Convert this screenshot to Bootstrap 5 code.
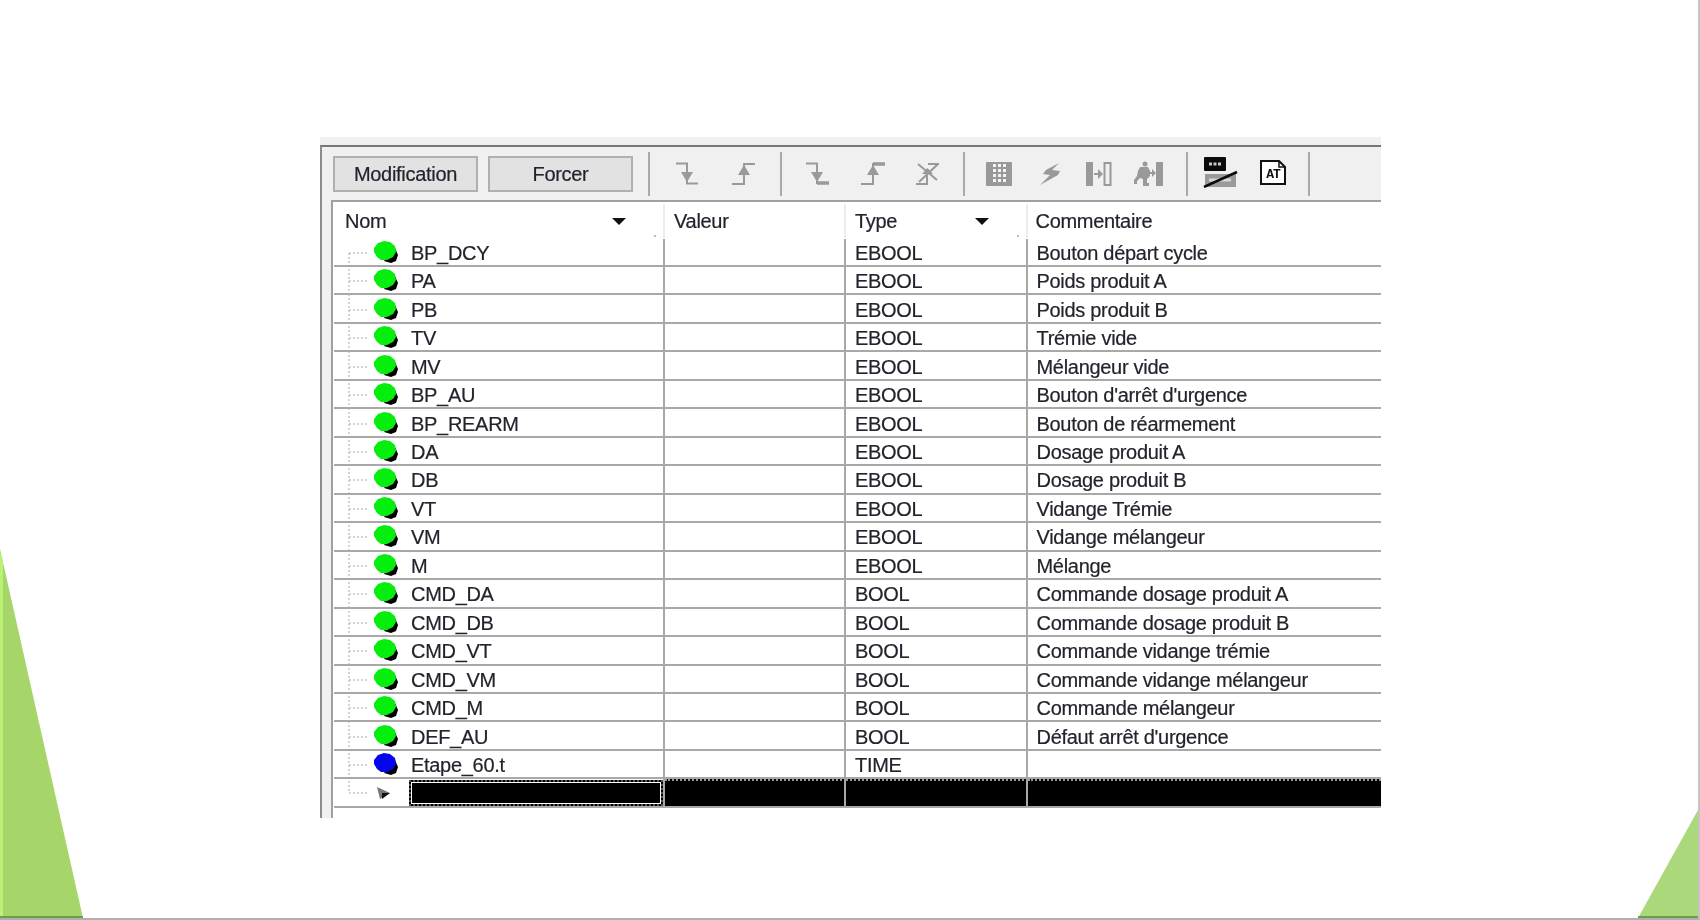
<!DOCTYPE html>
<html lang="fr">
<head>
<meta charset="utf-8">
<title>Table d'animation</title>
<link href="https://cdn.jsdelivr.net/npm/bootstrap@5.3.0/dist/css/bootstrap.min.css" rel="stylesheet">
<style>
body{margin:0;background:#fff;overflow:hidden}
.slide{position:relative;width:1700px;height:920px;overflow:hidden;background:#fff;padding:137px 0 0 320px;border-right:2px solid #c4c4c4;border-bottom:2px solid #b0b0b0}
.deco{position:absolute;left:0;top:0;width:1700px;height:920px;pointer-events:none}
.win{width:1061px;height:681px;font-family:"Liberation Sans",Arial,sans-serif;font-size:20px;letter-spacing:-.3px;color:#23232e;-webkit-text-stroke:.2px #23232e;filter:blur(.45px)}
.band{height:8px;background:#f0f0f0}
.winmain{height:673px;background:#f0f0f0;border-top:2px solid #777;border-left:2px solid #8c8c8c}
.tbar{height:53px;padding-left:11px;background:#f0f0f0}
.tbtn{width:145px;height:36px;margin-top:1px;padding:0;background:#e2e2e2;border:2px solid #b0b0b0;border-radius:0;color:#23232e;font-size:20px;letter-spacing:-.3px;line-height:30px}
.tbtn:hover{background:#e2e2e2;border-color:#b0b0b0;color:#23232e}
.tbtn+.tbtn{margin-left:10px}
.tsep{width:2px;height:44px;margin-top:1px;background:#a9a9a9;flex:none}
.ic{flex:none;color:#999;display:block}
.s1{margin-left:15px}.i1{margin-left:25px}.i2{margin-left:33px}.s2{margin-left:24px}
.i3{margin-left:23px}.i4{margin-left:32px}.i5{margin-left:30px}.s3{margin-left:23px}
.i6{margin-left:21px}.i7{margin-left:26px}.i8{margin-left:24px}.i9{margin-left:21px}.s4{margin-left:23px}
.i10{margin-left:15px;margin-top:-2px}.i11{margin-left:21px;margin-top:-3px}.s5{margin-left:21px}
.garea{margin-left:9px;height:618px;background:#fff;border-left:2px solid #a0a0a0;border-top:2px solid #a0a0a0;overflow:hidden}
.grow-h,.grow-r{display:grid;grid-template-columns:331px 181px 181.500px 1fr;margin-left:1px}
.grow-h{height:36.5px}
.grow-r{height:28.47px;border-bottom:2px solid #a8a8a8}
.hcell{position:relative;display:flex;align-items:center;padding:0 0 1px 9px;border-right:2px solid #ececec;height:34px;margin-top:2px}
.hcell:first-child{padding-left:11px}
.hcell:last-child{border-right:0;padding-left:8px}
.harrow{position:absolute;top:14px;width:0;height:0;border-left:7px solid transparent;border-right:7px solid transparent;border-top:7px solid #111}
.hdot{position:absolute;right:7px;bottom:1px;width:2px;height:2px;background:#bbb}
.hname .harrow,.htype .harrow{right:37px}
.cell{display:flex;align-items:center;border-right:2px solid #a8a8a8;padding:2px 0 0 9px;height:26.47px;white-space:nowrap}
.cell:last-child{border-right:0;padding-left:9px}
.cell.cname{padding-left:6px}
.tree{flex:none;overflow:visible;margin-right:11px}
.cell.cblack{background:#000;border-right:2px solid #a8a8a8;border-top:2px dotted #999;height:27px;padding:0}
.cell.cblack:last-child{border-right:0}
.cname-sel{padding-left:6px;height:26.47px;display:flex;align-items:center;border-right:2px solid #a8a8a8}
.selbox{flex:1;height:26px;margin:1px 0 0 -2px;background:#000;border:2px dotted #555;box-shadow:inset 0 0 0 1px #fff}
.defs{position:absolute;width:0;height:0}
</style>
</head>
<body>
<svg class="defs" aria-hidden="true">
<defs>
<symbol id="g" overflow="visible" viewBox="0 0 60 28"><path d="M44 22L51 24 56 22 58 16 55 9 49 16Z" fill="#000"/><path d="M34 9l4-5 6-2 6 1 5 4 1 6-3 5-6 3-6 0-4-3-3-5z" fill="#06ee0e"/></symbol>
<symbol id="b" overflow="visible" viewBox="0 0 60 28"><path d="M44 22L51 24 56 22 58 16 55 9 49 16Z" fill="#000"/><path d="M34 9l4-5 6-2 6 1 5 4 1 6-3 5-6 3-6 0-4-3-3-5z" fill="#0606ee"/></symbol>
</defs>
</svg>

<div class="slide">
<svg class="deco" viewBox="0 0 1700 920" aria-hidden="true">
<polygon points="0,549 83,918 0,918" fill="#a6d669"/>
<polygon points="0,552 3,562 3,918 0,918" fill="#b9f274"/>
<polygon points="1698,810 1698,918 1638,918" fill="#abd87b"/>
<rect x="0" y="916" width="83" height="2" fill="#6f9a48"/>
<rect x="1638" y="916" width="60" height="2" fill="#6f9a48"/>
</svg>

<div class="win">
<div class="band"></div>
<div class="winmain">
<div class="tbar d-flex align-items-center">
<button type="button" class="btn tbtn">Modification</button>
<button type="button" class="btn tbtn">Forcer</button>
<span class="tsep s1"></span>
<svg class="ic i1" width="24" height="26" viewBox="0 0 24 26"><path d="M1 2.5H12V22.5H23" fill="none" stroke="currentColor" stroke-width="2"/><path d="M6 11H18L12 21Z" fill="currentColor"/></svg>
<svg class="ic i2" width="24" height="26" viewBox="0 0 24 26"><path d="M0 23H12V3H23" fill="none" stroke="currentColor" stroke-width="2"/><path d="M6 14H18L12 4Z" fill="currentColor"/></svg>
<span class="tsep s2"></span>
<svg class="ic i3" width="24" height="26" viewBox="0 0 24 26"><path d="M1 2.5H12V22H23" fill="none" stroke="currentColor" stroke-width="2"/><path d="M12 22H24" stroke="currentColor" stroke-width="3.5"/><path d="M6 11H18L12 21Z" fill="currentColor"/></svg>
<svg class="ic i4" width="24" height="26" viewBox="0 0 24 26"><path d="M0 23H12V3H23" fill="none" stroke="currentColor" stroke-width="2"/><path d="M12 3H24" stroke="currentColor" stroke-width="3.5"/><path d="M6 14H18L12 4Z" fill="currentColor"/></svg>
<svg class="ic i5" width="25" height="26" viewBox="0 0 25 26"><path d="M3 3L22 19M23 3L4 21M12 8V23M1 23H13M13 3H24" fill="none" stroke="currentColor" stroke-width="2"/><path d="M7 13H18L12.500 7Z" fill="currentColor"/></svg>
<span class="tsep s3"></span>
<svg class="ic i6" width="26" height="24" viewBox="0 0 26 24"><rect width="26" height="24" rx="1" fill="currentColor"/><path d="M7 2h3v3H7zM12 2h3v3h-3zM17 2h3v3h-3zM7 7h3v3H7zM12 7h3v3h-3zM17 7h3v3h-3zM7 12h3v3H7zM12 12h3v3h-3zM17 12h3v3h-3zM7 17h3v3H7zM12 17h3v3h-3zM17 17h3v3h-3z" fill="#f4f4f4"/></svg>
<svg class="ic i7" width="24" height="26" viewBox="0 0 24 26"><path d="M21 2L8 9 5 13 12 14 2 24 20 14 22 10 14 9Z" fill="currentColor"/></svg>
<svg class="ic i8" width="26" height="24" viewBox="0 0 26 24"><path d="M0 0h7v24H0z" fill="currentColor"/><path d="M18.500 1h6v22h-6z" fill="none" stroke="currentColor" stroke-width="2"/><path d="M8 12h5" stroke="currentColor" stroke-width="2"/><path d="M12 7l5 5-5 5z" fill="currentColor"/></svg>
<svg class="ic i9" width="30" height="26" viewBox="0 0 30 26"><circle cx="12" cy="3" r="2.500" fill="currentColor"/><path d="M7 6h8l2 4v5l-3 3v4h2v3h-6v-7l-3-1-3 3v3H1v-4l3-4 1-5z" fill="currentColor"/><path d="M23 1h7v24h-7z" fill="currentColor"/><path d="M16 12h4" stroke="currentColor" stroke-width="2"/><path d="M19 8l4 4-4 4z" fill="currentColor"/></svg>
<span class="tsep s4"></span>
<svg class="ic i10" width="35" height="31" viewBox="0 0 35 31"><rect x="1" y="0" width="22" height="14" rx="1" fill="#0a0a0a"/><path d="M6 5.500h3v3H6zM10.500 5.500h3v3h-3zM15 5.500h3v3h-3z" fill="#c9c9c9"/><rect x="2" y="17" width="31" height="13" fill="#9a9a9a"/><path d="M6 21.500h22v3H6z" fill="#d6d6d6"/><path d="M1 30L34 15" stroke="#0a0a0a" stroke-width="2.500"/></svg>
<svg class="ic i11" width="28" height="27" viewBox="0 0 28 27"><path d="M2 2H20L26 8V25H2Z" fill="#fff" stroke="#111" stroke-width="2"/><path d="M20 2V8H26" fill="none" stroke="#111" stroke-width="1.500"/><text x="14" y="19" text-anchor="middle" font-family="Liberation Mono, monospace" font-weight="700" font-size="13" letter-spacing="-1" stroke="none" fill="#111">AT</text></svg>
<span class="tsep s5"></span>
</div>

<div class="garea">
<div class="grow-h">
<div class="hcell hname">Nom<span class="harrow"></span><span class="hdot"></span></div>
<div class="hcell">Valeur</div>
<div class="hcell htype">Type<span class="harrow"></span><span class="hdot"></span></div>
<div class="hcell">Commentaire</div>
</div>

<div class="grow-r"><div class="cell cname"><svg class="tree" width="60" height="28"><path d="M9 14V30M9 14H28" fill="none" stroke="#aaa" stroke-dasharray="2 2"/><use href="#g" width="60" height="28"/></svg>BP_DCY</div><div class="cell"></div><div class="cell">EBOOL</div><div class="cell">Bouton départ cycle</div></div>
<div class="grow-r"><div class="cell cname"><svg class="tree" width="60" height="28"><path d="M9 -2V30M9 14H28" fill="none" stroke="#aaa" stroke-dasharray="2 2"/><use href="#g" width="60" height="28"/></svg>PA</div><div class="cell"></div><div class="cell">EBOOL</div><div class="cell">Poids produit A</div></div>
<div class="grow-r"><div class="cell cname"><svg class="tree" width="60" height="28"><path d="M9 -2V30M9 14H28" fill="none" stroke="#aaa" stroke-dasharray="2 2"/><use href="#g" width="60" height="28"/></svg>PB</div><div class="cell"></div><div class="cell">EBOOL</div><div class="cell">Poids produit B</div></div>
<div class="grow-r"><div class="cell cname"><svg class="tree" width="60" height="28"><path d="M9 -2V30M9 14H28" fill="none" stroke="#aaa" stroke-dasharray="2 2"/><use href="#g" width="60" height="28"/></svg>TV</div><div class="cell"></div><div class="cell">EBOOL</div><div class="cell">Trémie vide</div></div>
<div class="grow-r"><div class="cell cname"><svg class="tree" width="60" height="28"><path d="M9 -2V30M9 14H28" fill="none" stroke="#aaa" stroke-dasharray="2 2"/><use href="#g" width="60" height="28"/></svg>MV</div><div class="cell"></div><div class="cell">EBOOL</div><div class="cell">Mélangeur vide</div></div>
<div class="grow-r"><div class="cell cname"><svg class="tree" width="60" height="28"><path d="M9 -2V30M9 14H28" fill="none" stroke="#aaa" stroke-dasharray="2 2"/><use href="#g" width="60" height="28"/></svg>BP_AU</div><div class="cell"></div><div class="cell">EBOOL</div><div class="cell">Bouton d'arrêt d'urgence</div></div>
<div class="grow-r"><div class="cell cname"><svg class="tree" width="60" height="28"><path d="M9 -2V30M9 14H28" fill="none" stroke="#aaa" stroke-dasharray="2 2"/><use href="#g" width="60" height="28"/></svg>BP_REARM</div><div class="cell"></div><div class="cell">EBOOL</div><div class="cell">Bouton de réarmement</div></div>
<div class="grow-r"><div class="cell cname"><svg class="tree" width="60" height="28"><path d="M9 -2V30M9 14H28" fill="none" stroke="#aaa" stroke-dasharray="2 2"/><use href="#g" width="60" height="28"/></svg>DA</div><div class="cell"></div><div class="cell">EBOOL</div><div class="cell">Dosage produit A</div></div>
<div class="grow-r"><div class="cell cname"><svg class="tree" width="60" height="28"><path d="M9 -2V30M9 14H28" fill="none" stroke="#aaa" stroke-dasharray="2 2"/><use href="#g" width="60" height="28"/></svg>DB</div><div class="cell"></div><div class="cell">EBOOL</div><div class="cell">Dosage produit B</div></div>
<div class="grow-r"><div class="cell cname"><svg class="tree" width="60" height="28"><path d="M9 -2V30M9 14H28" fill="none" stroke="#aaa" stroke-dasharray="2 2"/><use href="#g" width="60" height="28"/></svg>VT</div><div class="cell"></div><div class="cell">EBOOL</div><div class="cell">Vidange Trémie</div></div>
<div class="grow-r"><div class="cell cname"><svg class="tree" width="60" height="28"><path d="M9 -2V30M9 14H28" fill="none" stroke="#aaa" stroke-dasharray="2 2"/><use href="#g" width="60" height="28"/></svg>VM</div><div class="cell"></div><div class="cell">EBOOL</div><div class="cell">Vidange mélangeur</div></div>
<div class="grow-r"><div class="cell cname"><svg class="tree" width="60" height="28"><path d="M9 -2V30M9 14H28" fill="none" stroke="#aaa" stroke-dasharray="2 2"/><use href="#g" width="60" height="28"/></svg>M</div><div class="cell"></div><div class="cell">EBOOL</div><div class="cell">Mélange</div></div>
<div class="grow-r"><div class="cell cname"><svg class="tree" width="60" height="28"><path d="M9 -2V30M9 14H28" fill="none" stroke="#aaa" stroke-dasharray="2 2"/><use href="#g" width="60" height="28"/></svg>CMD_DA</div><div class="cell"></div><div class="cell">BOOL</div><div class="cell">Commande dosage produit A</div></div>
<div class="grow-r"><div class="cell cname"><svg class="tree" width="60" height="28"><path d="M9 -2V30M9 14H28" fill="none" stroke="#aaa" stroke-dasharray="2 2"/><use href="#g" width="60" height="28"/></svg>CMD_DB</div><div class="cell"></div><div class="cell">BOOL</div><div class="cell">Commande dosage produit B</div></div>
<div class="grow-r"><div class="cell cname"><svg class="tree" width="60" height="28"><path d="M9 -2V30M9 14H28" fill="none" stroke="#aaa" stroke-dasharray="2 2"/><use href="#g" width="60" height="28"/></svg>CMD_VT</div><div class="cell"></div><div class="cell">BOOL</div><div class="cell">Commande vidange trémie</div></div>
<div class="grow-r"><div class="cell cname"><svg class="tree" width="60" height="28"><path d="M9 -2V30M9 14H28" fill="none" stroke="#aaa" stroke-dasharray="2 2"/><use href="#g" width="60" height="28"/></svg>CMD_VM</div><div class="cell"></div><div class="cell">BOOL</div><div class="cell">Commande vidange mélangeur</div></div>
<div class="grow-r"><div class="cell cname"><svg class="tree" width="60" height="28"><path d="M9 -2V30M9 14H28" fill="none" stroke="#aaa" stroke-dasharray="2 2"/><use href="#g" width="60" height="28"/></svg>CMD_M</div><div class="cell"></div><div class="cell">BOOL</div><div class="cell">Commande mélangeur</div></div>
<div class="grow-r"><div class="cell cname"><svg class="tree" width="60" height="28"><path d="M9 -2V30M9 14H28" fill="none" stroke="#aaa" stroke-dasharray="2 2"/><use href="#g" width="60" height="28"/></svg>DEF_AU</div><div class="cell"></div><div class="cell">BOOL</div><div class="cell">Défaut arrêt d'urgence</div></div>
<div class="grow-r"><div class="cell cname"><svg class="tree" width="60" height="28"><path d="M9 -2V30M9 14H28" fill="none" stroke="#aaa" stroke-dasharray="2 2"/><use href="#b" width="60" height="28"/></svg>Etape_60.t</div><div class="cell"></div><div class="cell">TIME</div><div class="cell"></div></div>
<div class="grow-r"><div class="cname-sel"><svg class="tree" width="60" height="28"><path d="M9 -2V14H28" fill="none" stroke="#aaa" stroke-dasharray="2 2"/><path d="M37 8L50 14 40 20Z" fill="#777"/><path d="M42 20L50 14 42 14Z" fill="#111"/></svg><span class="selbox"></span></div><div class="cell cblack"></div><div class="cell cblack"></div><div class="cell cblack"></div></div>
</div>
</div>
</div>
</div>
<script src="https://cdn.jsdelivr.net/npm/bootstrap@5.3.0/dist/js/bootstrap.bundle.min.js"></script>
</body>
</html>
